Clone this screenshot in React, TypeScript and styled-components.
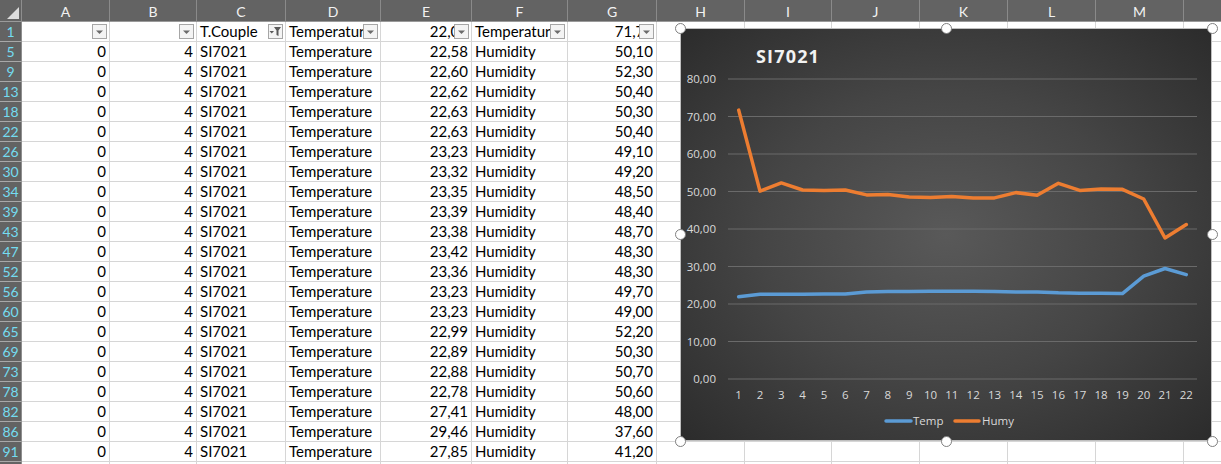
import React from "react";
import styled, { createGlobalStyle } from "styled-components";

const Global = createGlobalStyle`
  html, body { margin: 0; padding: 0; background: #ffffff; overflow: hidden; }
  #root { width: 1221px; height: 464px; }
`;

const COLS = "22px 88px 87px 89px 95px 91px 96px 89px 88px 87px 88px 88px 88px 88px 88px";
const LETTERS = ["A", "B", "C", "D", "E", "F", "G", "H", "I", "J", "K", "L", "M", ""];

const Page = styled.div`
  position: relative;
  width: 1221px;
  height: 464px;
  overflow: hidden;
  font-family: Lato, "Liberation Sans", sans-serif;
`;

const Sheet = styled.div`
  display: flex;
  flex-direction: column;
`;

const HeaderRow = styled.div`
  display: grid;
  grid-template-columns: ${COLS};
  height: 22px;
  background: #636363;
`;

const Corner = styled.div`
  position: relative;
  border-right: 1px solid #8e8e8e;
  border-bottom: 1px solid #9a9a9a;
  box-sizing: border-box;
  &::after {
    content: "";
    position: absolute;
    right: 2px;
    bottom: 2px;
    width: 0;
    height: 0;
    border-left: 12px solid transparent;
    border-bottom: 12px solid #dcdcdc;
  }
`;

const ColHead = styled.div`
  box-sizing: border-box;
  border-right: 1px solid #8a8a8a;
  border-bottom: 1px solid #9a9a9a;
  color: #f2f2f2;
  font-size: 14px;
  display: flex;
  align-items: center;
  justify-content: center;
  padding-top: 1px;
`;

const Row = styled.div`
  display: grid;
  grid-template-columns: ${COLS};
  height: 20px;
`;

const RowHead = styled.div`
  box-sizing: border-box;
  background: #636363;
  border-right: 1px solid #8e8e8e;
  border-bottom: 1px solid #a8a8a8;
  color: #74dcf0;
  font-size: 14px;
  display: flex;
  align-items: center;
  justify-content: center;
`;

const Cell = styled.div<{ $align?: "left" | "right" }>`
  position: relative;
  box-sizing: border-box;
  border-right: 1px solid #d6d6d6;
  border-bottom: 1px solid #d6d6d6;
  font-size: 15px;
  color: #000;
  display: flex;
  align-items: center;
  justify-content: ${(p) => (p.$align === "right" ? "flex-end" : "flex-start")};
  padding: 0 3px 0 3px;
  overflow: hidden;
  white-space: nowrap;
  line-height: 19px;
`;

const FilterBtn = styled.div`
  position: absolute;
  right: 2px;
  top: 2px;
  width: 15px;
  height: 15px;
  box-sizing: border-box;
  border: 1px solid #a6a6a6;
  background: #f4f4f4;
  display: flex;
  align-items: center;
  justify-content: center;
`;

const ChartBox = styled.div`
  position: absolute;
  left: 680px;
  top: 28px;
  width: 532px;
  height: 413px;
  box-sizing: border-box;
  border: 1px solid #bfbfbf;
  background: radial-gradient(ellipse 70% 70% at 50% 50%, #595959 0%, #454545 50%, #2c2c2c 100%);
`;

const Handle = styled.div<{ $x: number; $y: number }>`
  position: absolute;
  left: ${(p) => p.$x}px;
  top: ${(p) => p.$y}px;
  width: 9px;
  height: 9px;
  margin: -6px 0 0 -6px;
  border-radius: 50%;
  background: #ffffff;
  border: 1.5px solid #7f7f7f;
`;

const ChartSvg = styled.svg`
  display: block;
  font-family: "Open Sans", "Noto Sans", sans-serif;
`;

type Rec = { n: string; e: string; g: string };
const rows: Rec[] = [
  { n: "5", e: "22,58", g: "50,10" },
  { n: "9", e: "22,60", g: "52,30" },
  { n: "13", e: "22,62", g: "50,40" },
  { n: "18", e: "22,63", g: "50,30" },
  { n: "22", e: "22,63", g: "50,40" },
  { n: "26", e: "23,23", g: "49,10" },
  { n: "30", e: "23,32", g: "49,20" },
  { n: "34", e: "23,35", g: "48,50" },
  { n: "39", e: "23,39", g: "48,40" },
  { n: "43", e: "23,38", g: "48,70" },
  { n: "47", e: "23,42", g: "48,30" },
  { n: "52", e: "23,36", g: "48,30" },
  { n: "56", e: "23,23", g: "49,70" },
  { n: "60", e: "23,23", g: "49,00" },
  { n: "65", e: "22,99", g: "52,20" },
  { n: "69", e: "22,89", g: "50,30" },
  { n: "73", e: "22,88", g: "50,70" },
  { n: "78", e: "22,78", g: "50,60" },
  { n: "82", e: "27,41", g: "48,00" },
  { n: "86", e: "29,46", g: "37,60" },
  { n: "91", e: "27,85", g: "41,20" },
];

const temp = [21.95, ...rows.map((r) => parseFloat(r.e.replace(",", ".")))];
const humy = [71.7, ...rows.map((r) => parseFloat(r.g.replace(",", ".")))];

const Caret = () => (
  <svg width="9" height="6" viewBox="0 0 9 6">
    <path d="M1 1.5 L8 1.5 L4.5 5 Z" fill="#6b6b6b" />
  </svg>
);

const FunnelIcon = () => (
  <svg width="13" height="11" viewBox="0 0 13 11">
    <path d="M5 1 H12 L9.5 4.5 V10 L7.5 9 V4.5 Z" fill="#595959" />
    <path d="M0.5 5 H5 L2.75 7.5 Z" fill="#595959" />
  </svg>
);

const Filter = ({ active }: { active?: boolean }) => (
  <FilterBtn>{active ? <FunnelIcon /> : <Caret />}</FilterBtn>
);

const X0 = 48;
const PW = 469;
const STEP = PW / 22;
const Y0 = 351;
const K = 3.75;
const px = (i: number) => X0 + STEP * (i + 0.5);
const py = (v: number) => Y0 - v * K;
const toPts = (arr: number[]) => arr.map((v, i) => `${px(i).toFixed(1)},${py(v).toFixed(1)}`).join(" ");

const Chart = () => {
  const ticks = [0, 10, 20, 30, 40, 50, 60, 70, 80];
  return (
    <ChartBox>
      <ChartSvg width="530" height="411" viewBox="1 1 530 411">
        <text x="108" y="35" textAnchor="middle" fill="#f2f2f2" fontSize="18" fontWeight="700" letterSpacing="1.2">
          SI7021
        </text>
        {ticks.map((t) => (
          <g key={t}>
            <line x1={X0} x2={X0 + PW} y1={py(t)} y2={py(t)} stroke="#6a6a6a" strokeWidth="1" />
            <text x="36" y={py(t) + 4} textAnchor="end" fill="#d9d9d9" fontSize="11.5">
              {t.toFixed(2).replace(".", ",")}
            </text>
          </g>
        ))}
        {temp.map((_, i) => (
          <text key={i} x={px(i)} y="371" textAnchor="middle" fill="#d9d9d9" fontSize="11.5">
            {i + 1}
          </text>
        ))}
        <polyline points={toPts(humy)} fill="none" stroke="#ed7d31" strokeWidth="3.5" strokeLinejoin="round" strokeLinecap="round" />
        <polyline points={toPts(temp)} fill="none" stroke="#5b9bd5" strokeWidth="3.5" strokeLinejoin="round" strokeLinecap="round" />
        <line x1="206" x2="231" y1="393" y2="393" stroke="#5b9bd5" strokeWidth="3.5" strokeLinecap="round" />
        <text x="233" y="397" fill="#d9d9d9" fontSize="11.5">Temp</text>
        <line x1="275" x2="299" y1="393" y2="393" stroke="#ed7d31" strokeWidth="3.5" strokeLinecap="round" />
        <text x="302" y="397" fill="#d9d9d9" fontSize="11.5">Humy</text>
      </ChartSvg>
      <Handle $x={0} $y={0} />
      <Handle $x={266} $y={0} />
      <Handle $x={532} $y={0} />
      <Handle $x={0} $y={206} />
      <Handle $x={532} $y={206} />
      <Handle $x={0} $y={413} />
      <Handle $x={266} $y={413} />
      <Handle $x={532} $y={413} />
    </ChartBox>
  );
};

const EmptyCells = ({ count }: { count: number }) => (
  <>
    {Array.from({ length: count }).map((_, i) => (
      <Cell key={i} />
    ))}
  </>
);

export default function App() {
  return (
    <Page>
      <Global />
      <Sheet>
        <HeaderRow>
          <Corner />
          {LETTERS.map((l, i) => (
            <ColHead key={i}>{l}</ColHead>
          ))}
        </HeaderRow>
        <Row>
          <RowHead>1</RowHead>
          <Cell $align="right"><Filter /></Cell>
          <Cell $align="right"><Filter /></Cell>
          <Cell>T.Couple<Filter active /></Cell>
          <Cell>Temperature<Filter /></Cell>
          <Cell $align="right">22,00<Filter /></Cell>
          <Cell>Temperature<Filter /></Cell>
          <Cell $align="right">71,70<Filter /></Cell>
          <EmptyCells count={7} />
        </Row>
        {rows.map((r) => (
          <Row key={r.n}>
            <RowHead>{r.n}</RowHead>
            <Cell $align="right">0</Cell>
            <Cell $align="right">4</Cell>
            <Cell>SI7021</Cell>
            <Cell>Temperature</Cell>
            <Cell $align="right">{r.e}</Cell>
            <Cell>Humidity</Cell>
            <Cell $align="right">{r.g}</Cell>
            <EmptyCells count={7} />
          </Row>
        ))}
        <Row>
          <RowHead />
          <EmptyCells count={14} />
        </Row>
      </Sheet>
      <Chart />
    </Page>
  );
}
